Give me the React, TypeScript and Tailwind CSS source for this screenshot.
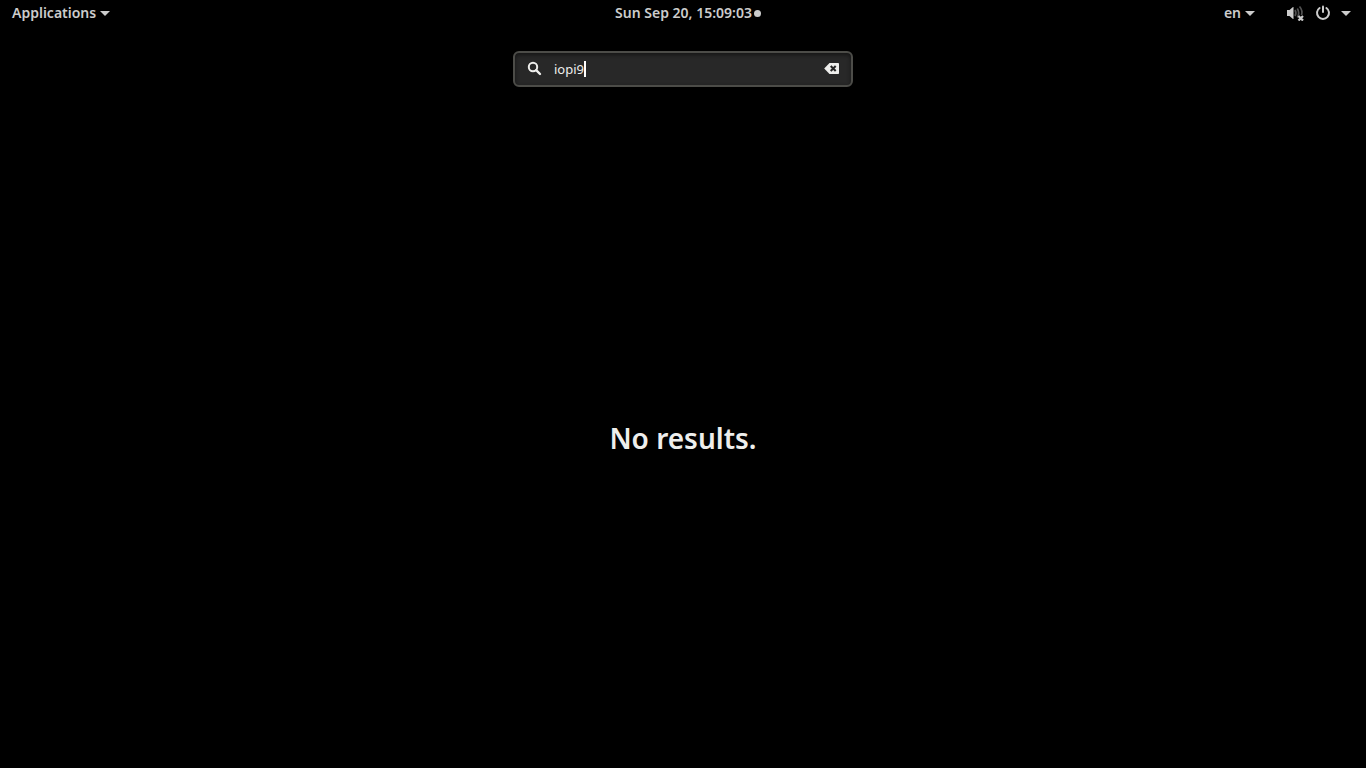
import { useState } from "react";

function CaretDown() {
  return (
    <svg width="10" height="5" viewBox="0 0 10 5" fill="currentColor" aria-hidden="true">
      <path d="M0 0h10L5 5z" />
    </svg>
  );
}

function SearchIcon() {
  return (
    <svg className="shrink-0" width="16" height="16" viewBox="0 0 16 16" fill="none" stroke="currentColor" aria-hidden="true">
      <circle cx="6" cy="6" r="4.2" strokeWidth="2" />
      <path d="M9.2 9.2l3.8 3.8" strokeWidth="2.4" strokeLinecap="round" />
    </svg>
  );
}

function ClearIcon() {
  return (
    <svg width="16" height="16" viewBox="0 0 16 16" aria-hidden="true">
      <path d="M5.5 2H14.2a.8.8 0 0 1 .8.8v9.4a.8.8 0 0 1-.8.8H5.5L.2 7.5z" fill="currentColor" />
      <path d="M6.7 5l5 5M11.7 5l-5 5" stroke="#262626" strokeWidth="2" />
    </svg>
  );
}

function VolumeMutedIcon() {
  return (
    <svg width="18" height="16" viewBox="0 0 18 16" fill="none" stroke="currentColor" aria-hidden="true">
      <path d="M0 5h2.5L6 2h.5v12H6L2.500 11H0z" fill="currentColor" stroke="none" />
      <g strokeWidth="1.7" opacity="0.4">
        <path d="M8 5q1.800 3 0 6" />
        <path d="M10.300 3.500q2.800 4.500 0 9" />
        <path d="M12.500 1.500q3.500 4 2 8.500" />
      </g>
      <path d="M11.500 11l4.500 4.500M16 11l-4.500 4.500" strokeWidth="2.200" />
    </svg>
  );
}

function PowerIcon() {
  return (
    <svg width="16" height="16" viewBox="0 0 16 16" fill="none" stroke="currentColor" strokeWidth="2" strokeLinecap="round" aria-hidden="true">
      <path d="M4.600 3a6 6 0 1 0 6.800 0" />
      <path d="M8 1.500v5.500" />
    </svg>
  );
}

export default function App() {
  const [query, setQuery] = useState("iopi9");

  return (
    <div className="flex min-h-screen flex-col bg-black font-['Noto_Sans','Open_Sans',sans-serif] text-[#eeeeec]">
      <header className="grid h-[26px] grid-cols-[1fr_auto_1fr] items-center px-3 text-[14px] leading-5 font-semibold text-[#cccccc]">
        <button type="button" className="flex items-center gap-1 justify-self-start">
          Applications
          <CaretDown />
        </button>
        <button type="button" className="flex items-center gap-[2px] pl-[10px]">
          Sun Sep 20, 15:09:03
          <span className="size-[7px] rounded-full bg-current" />
        </button>
        <div className="flex items-center gap-8 justify-self-end pr-[3px]">
          <button type="button" className="flex items-center gap-1">
            en
            <CaretDown />
          </button>
          <button type="button" aria-label="System menu" className="flex items-center gap-[10px]">
            <VolumeMutedIcon />
            <PowerIcon />
            <CaretDown />
          </button>
        </div>
      </header>

      <div className="flex justify-center pt-[25px]">
        <label className="flex h-9 w-[340px] items-center rounded-md border-2 border-[#4c4c48] bg-[#282828] pr-[11px] pl-3 shadow-[inset_0_2px_4px_rgba(0,0,0,0.5)]">
          <SearchIcon />
          <input
            type="text"
            aria-label="Search"
            value={query}
            onChange={(event) => setQuery(event.target.value)}
            className="ml-[11px] field-sizing-content min-w-0 bg-transparent text-[13px] leading-5 caret-transparent outline-none"
          />
          <span className="h-4 w-[2px] shrink-0 bg-white" />
          <button type="button" aria-label="Clear search" className="ml-auto" onClick={() => setQuery("")}>
            <ClearIcon />
          </button>
        </label>
      </div>

      <main className="flex flex-1 items-center justify-center pt-5">
        <h1 className="text-[28px] leading-10 font-semibold">No results.</h1>
      </main>
    </div>
  );
}
